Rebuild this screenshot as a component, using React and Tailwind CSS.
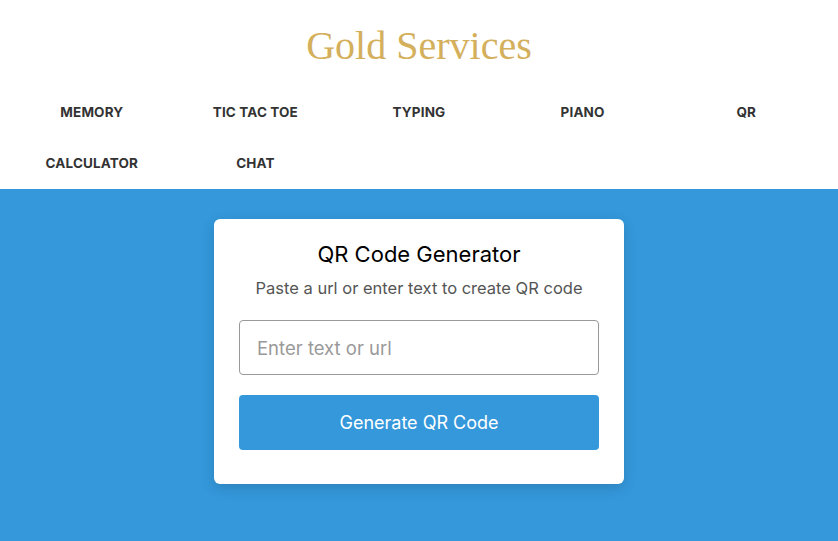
import React from "react";

const items = ["MEMORY", "TIC TAC TOE", "TYPING", "PIANO", "QR", "CALCULATOR", "CHAT"];

export default function App() {
  return (
    <div className="min-h-[541px] flex flex-col bg-[#3498db]">
      <header className="bg-white h-[189px] flex flex-col">
        <h1 className="text-center text-[40px] leading-none text-[#d4af5c] pt-[26px] font-['Liberation_Serif',serif]">
          Gold Services
        </h1>
        <nav className="grid grid-cols-5 px-[10px] mt-[38px] gap-y-[35px] font-['Inter',sans-serif]">
          {items.map((t) => (
            <a key={t} className="text-center text-[13.5px] leading-[16px] font-bold text-[#333333] tracking-[0.01em]">
              {t}
            </a>
          ))}
        </nav>
      </header>
      <main className="flex justify-center pt-[30px] font-['Inter',sans-serif]">
        <div className="w-[410px] bg-white rounded-[6px] shadow-[0_4px_14px_rgba(0,0,0,0.15)] px-[25px] pt-[22px] pb-[34px] flex flex-col">
          <h2 className="text-center text-[22px] leading-[26px] text-black">QR Code Generator</h2>
          <p className="text-center text-[16.5px] leading-[20px] text-[#555] mt-[11px]">
            Paste a url or enter text to create QR code
          </p>
          <input
            className="mt-[22px] h-[55px] w-full border border-[#999] rounded-[4px] px-[17px] text-[18.5px] outline-none placeholder:text-[#999]"
            placeholder="Enter text or url"
          />
          <button className="mt-[20px] h-[55px] w-full bg-[#3498db] rounded-[4px] text-white text-[18px]">
            Generate QR Code
          </button>
        </div>
      </main>
    </div>
  );
}
